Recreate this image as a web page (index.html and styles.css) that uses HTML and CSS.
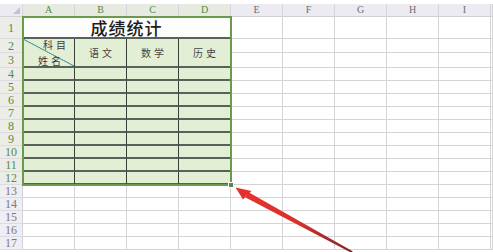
FILE: index.html
```html
<!DOCTYPE html>
<html>
<head>
<meta charset="utf-8">
<link rel="stylesheet" href="styles.css">
</head>
<body>
<div class="sheet">
  <div class="corner"><span class="tri"></span></div>
  <div class="ch sel">A</div><div class="ch sel">B</div><div class="ch sel">C</div><div class="ch sel">D</div>
  <div class="ch">E</div><div class="ch">F</div><div class="ch">G</div><div class="ch">H</div><div class="ch">I</div><div class="ch"></div>

  <div class="tbl">
    <div class="t title">成绩统计</div>
    <div class="t diag"><span class="subj">科目</span><span class="name">姓名</span></div>
    <div class="t hd">语文</div>
    <div class="t hd">数学</div>
    <div class="t hd">历史</div>
    <div class="t"></div><div class="t"></div><div class="t"></div><div class="t"></div>
    <div class="t"></div><div class="t"></div><div class="t"></div><div class="t"></div>
    <div class="t"></div><div class="t"></div><div class="t"></div><div class="t"></div>
    <div class="t"></div><div class="t"></div><div class="t"></div><div class="t"></div>
    <div class="t"></div><div class="t"></div><div class="t"></div><div class="t"></div>
    <div class="t"></div><div class="t"></div><div class="t"></div><div class="t"></div>
    <div class="t"></div><div class="t"></div><div class="t"></div><div class="t"></div>
    <div class="t"></div><div class="t"></div><div class="t"></div><div class="t"></div>
    <div class="t"></div><div class="t"></div><div class="t"></div><div class="t"></div>
    <span class="handle"></span>
  </div>

  <div class="rh sel">1</div><div class="c"></div><div class="c"></div><div class="c"></div><div class="c"></div><div class="c"></div><div class="c"></div>
  <div class="rh sel">2</div><div class="c"></div><div class="c"></div><div class="c"></div><div class="c"></div><div class="c"></div><div class="c"></div>
  <div class="rh sel">3</div><div class="c"></div><div class="c"></div><div class="c"></div><div class="c"></div><div class="c"></div><div class="c"></div>
  <div class="rh sel">4</div><div class="c"></div><div class="c"></div><div class="c"></div><div class="c"></div><div class="c"></div><div class="c"></div>
  <div class="rh sel">5</div><div class="c"></div><div class="c"></div><div class="c"></div><div class="c"></div><div class="c"></div><div class="c"></div>
  <div class="rh sel">6</div><div class="c"></div><div class="c"></div><div class="c"></div><div class="c"></div><div class="c"></div><div class="c"></div>
  <div class="rh sel">7</div><div class="c"></div><div class="c"></div><div class="c"></div><div class="c"></div><div class="c"></div><div class="c"></div>
  <div class="rh sel">8</div><div class="c"></div><div class="c"></div><div class="c"></div><div class="c"></div><div class="c"></div><div class="c"></div>
  <div class="rh sel">9</div><div class="c"></div><div class="c"></div><div class="c"></div><div class="c"></div><div class="c"></div><div class="c"></div>
  <div class="rh sel">10</div><div class="c"></div><div class="c"></div><div class="c"></div><div class="c"></div><div class="c"></div><div class="c"></div>
  <div class="rh sel">11</div><div class="c"></div><div class="c"></div><div class="c"></div><div class="c"></div><div class="c"></div><div class="c"></div>
  <div class="rh sel">12</div><div class="c"></div><div class="c"></div><div class="c"></div><div class="c"></div><div class="c"></div><div class="c"></div>
  <div class="rh">13</div><div class="c"></div><div class="c"></div><div class="c"></div><div class="c"></div><div class="c"></div><div class="c"></div><div class="c"></div><div class="c"></div><div class="c"></div><div class="c"></div>
  <div class="rh">14</div><div class="c"></div><div class="c"></div><div class="c"></div><div class="c"></div><div class="c"></div><div class="c"></div><div class="c"></div><div class="c"></div><div class="c"></div><div class="c"></div>
  <div class="rh">15</div><div class="c"></div><div class="c"></div><div class="c"></div><div class="c"></div><div class="c"></div><div class="c"></div><div class="c"></div><div class="c"></div><div class="c"></div><div class="c"></div>
  <div class="rh">16</div><div class="c"></div><div class="c"></div><div class="c"></div><div class="c"></div><div class="c"></div><div class="c"></div><div class="c"></div><div class="c"></div><div class="c"></div><div class="c"></div>
  <div class="rh">17</div><div class="c"></div><div class="c"></div><div class="c"></div><div class="c"></div><div class="c"></div><div class="c"></div><div class="c"></div><div class="c"></div><div class="c"></div><div class="c"></div>
</div>

<svg class="arrow" width="493" height="252" viewBox="0 0 493 252">
  <defs>
    <linearGradient id="ag" x1="236" y1="188" x2="352" y2="252" gradientUnits="userSpaceOnUse">
      <stop offset="0" stop-color="#e8332f"/>
      <stop offset="0.55" stop-color="#d8302c"/>
      <stop offset="1" stop-color="#7a2626"/>
    </linearGradient>
  </defs>
  <polygon points="245.5,197.5 248.6,192.2 352.6,251.2 351.6,252.9" fill="url(#ag)"/>
  <polygon points="235.5,187.5 251.5,191 243,199.5" fill="#e6302c"/>
</svg>
</body>
</html>
```

FILE: styles.css
```css
html, body {
  margin: 0;
  padding: 0;
  background: #ffffff;
  overflow: hidden;
}

body {
  width: 493px;
  height: 252px;
  position: relative;
  font-family: "Liberation Serif", "DejaVu Serif", serif;
}

.sheet {
  padding-top: 4px;
  display: grid;
  grid-template-columns: 23px repeat(9, 52px) 1fr;
  grid-template-rows: 13px 22px 14px 15px repeat(14, 13px);
}

.corner {
  background: #ecebf1;
  border-right: 1px solid #d6d5dd;
  border-bottom: 1px solid #d0d0d6;
  box-sizing: border-box;
  position: relative;
}

.tri {
  position: absolute;
  right: 2px;
  bottom: 2px;
  width: 0;
  height: 0;
  border-left: 7px solid transparent;
  border-bottom: 7px solid #c4c3cc;
}

.ch {
  background: #ecebf1;
  border-right: 1px solid #d6d5dd;
  border-bottom: 1px solid #d0d0d6;
  box-sizing: border-box;
  font-size: 10px;
  color: #6d6d6d;
  display: flex;
  align-items: center;
  justify-content: center;
  line-height: 1;
}

.ch.sel {
  background: #e7eae0;
  color: #4e8a3e;
  border-bottom: 1px solid #8cb070;
}

.rh {
  background: #efeef3;
  border-right: 1px solid #d3d2da;
  border-bottom: 1px solid #dcdbe2;
  box-sizing: border-box;
  font-size: 12px;
  color: #7a7a7a;
  display: flex;
  align-items: center;
  justify-content: center;
  line-height: 1;
}

.rh.sel {
  background: #ebede6;
  color: #5a8a48;
}

.c {
  border-right: 1px solid #d4d4d4;
  border-bottom: 1px solid #d4d4d4;
  box-sizing: border-box;
}

.tbl {
  grid-column: 2 / 6;
  grid-row: 2 / 14;
  position: relative;
  display: grid;
  grid-template-columns: repeat(4, 1fr);
  grid-template-rows: 22px 14px 15px repeat(9, 13px);
  background: #e3efd5;
}

.tbl::after {
  content: "";
  position: absolute;
  inset: -1px -1px -1px -1px;
  border: 2px solid #6a9a4c;
  pointer-events: none;
}

.t {
  border-right: 1px solid #3a4238;
  border-bottom: 2px solid #59625a;
  box-sizing: border-box;
  font-family: "Noto Sans CJK SC", sans-serif;
}

.title {
  grid-column: 1 / 5;
  background: #fdfefb;
  font-size: 17px;
  font-weight: 500;
  color: #1c1c1c;
  display: flex;
  align-items: center;
  justify-content: center;
  padding-top: 1px;
  letter-spacing: 1px;
  line-height: 1;
}

.diag {
  grid-row: span 2;
  display: flex;
  flex-direction: column;
  justify-content: space-between;
  padding: 0 5px 0 15px;
  font-size: 10px;
  line-height: 11px;
  color: #3a3a3a;
  letter-spacing: 3px;
  background: linear-gradient(to top right, transparent calc(50% - 0.8px), #5c9e9a calc(50% - 0.3px), #5c9e9a calc(50% + 0.3px), transparent calc(50% + 0.8px));
}

.subj {
  align-self: flex-end;
}

.name {
  align-self: flex-start;
}

.hd {
  grid-row: span 2;
  font-size: 10px;
  letter-spacing: 3px;
  color: #454545;
  display: flex;
  align-items: center;
  justify-content: center;
  padding-left: 3px;
}

.handle {
  position: absolute;
  right: -3px;
  bottom: -3px;
  width: 4px;
  height: 4px;
  background: #5a8a46;
  border: 1px solid #ffffff;
  z-index: 2;
}

.arrow {
  position: absolute;
  left: 0;
  top: 0;
  pointer-events: none;
}
```
